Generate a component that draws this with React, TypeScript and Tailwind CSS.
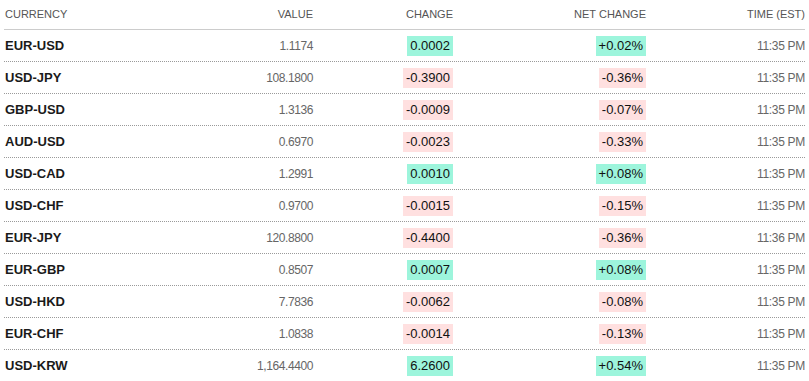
import React from "react";

type Row = { pair: string; value: string; change: string; net: string; time: string };

const rows: Row[] = [
  { pair: "EUR-USD", value: "1.1174", change: "0.0002", net: "+0.02%", time: "11:35 PM" },
  { pair: "USD-JPY", value: "108.1800", change: "-0.3900", net: "-0.36%", time: "11:35 PM" },
  { pair: "GBP-USD", value: "1.3136", change: "-0.0009", net: "-0.07%", time: "11:35 PM" },
  { pair: "AUD-USD", value: "0.6970", change: "-0.0023", net: "-0.33%", time: "11:35 PM" },
  { pair: "USD-CAD", value: "1.2991", change: "0.0010", net: "+0.08%", time: "11:35 PM" },
  { pair: "USD-CHF", value: "0.9700", change: "-0.0015", net: "-0.15%", time: "11:35 PM" },
  { pair: "EUR-JPY", value: "120.8800", change: "-0.4400", net: "-0.36%", time: "11:36 PM" },
  { pair: "EUR-GBP", value: "0.8507", change: "0.0007", net: "+0.08%", time: "11:35 PM" },
  { pair: "USD-HKD", value: "7.7836", change: "-0.0062", net: "-0.08%", time: "11:35 PM" },
  { pair: "EUR-CHF", value: "1.0838", change: "-0.0014", net: "-0.13%", time: "11:35 PM" },
  { pair: "USD-KRW", value: "1,164.4400", change: "6.2600", net: "+0.54%", time: "11:35 PM" },
];

function Badge({ text }: { text: string }) {
  const neg = text.startsWith("-");
  return (
    <span
      className={
        "inline-flex h-[20px] items-center px-[3px] text-[13px] leading-none text-[#111] " +
        (neg ? "bg-[#ffe0e0]" : "bg-[#9df5dc]")
      }
    >
      {text}
    </span>
  );
}

export default function App() {
  return (
    <div
      className="w-[809px] h-[381px] overflow-hidden bg-white pl-[4px] pr-[4px]"
      style={{ fontFamily: '"Liberation Sans", Arial, sans-serif' }}
    >
      <div className="flex h-[30px] items-center border-b border-[#cccccc] text-[11px] uppercase text-[#555]">
        <div className="w-[196px] pl-[1px]">Currency</div>
        <div className="w-[113px] text-right">Value</div>
        <div className="w-[140px] text-right">Change</div>
        <div className="w-[193px] text-right">Net Change</div>
        <div className="w-[159px] text-right">Time (EST)</div>
      </div>
      {rows.map((r) => (
        <div
          key={r.pair}
          className="flex h-[32px] items-center border-b border-dotted border-[#9a9a9a]"
        >
          <div className="w-[196px] pl-[1px] text-[13px] font-bold text-[#1a1a1a]">{r.pair}</div>
          <div className="w-[113px] text-right text-[12px] tracking-[-0.4px] text-[#666]">{r.value}</div>
          <div className="flex w-[140px] justify-end">
            <Badge text={r.change} />
          </div>
          <div className="flex w-[193px] justify-end">
            <Badge text={r.net} />
          </div>
          <div className="w-[159px] text-right text-[12px] tracking-[-0.3px] text-[#666]">{r.time}</div>
        </div>
      ))}
    </div>
  );
}
